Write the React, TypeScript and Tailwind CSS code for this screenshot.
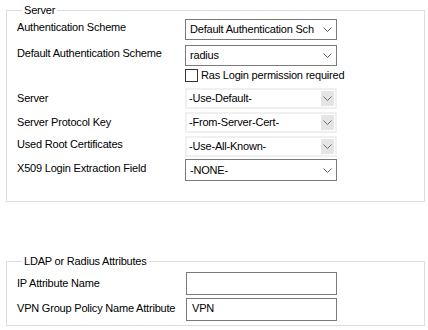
import React from "react";

function Chevron({ color }: { color: string }) {
  return (
    <svg width="9" height="5" viewBox="0 0 9 5" className="shrink-0">
      <path d="M0.5 0.5 L4.5 4.5 L8.5 0.5" fill="none" stroke={color} strokeWidth="1" />
    </svg>
  );
}

function Combo({ text }: { text: string }) {
  return (
    <div className="h-[21px] w-[152px] border border-[#7a7a7a] bg-white flex items-center pl-[4px] pr-[4px]">
      <span className="flex-1 whitespace-nowrap overflow-hidden leading-[15px]">{text}</span>
      <Chevron color="#5a5a5a" />
    </div>
  );
}

function DisabledCombo({ text }: { text: string }) {
  return (
    <div className="h-[21px] w-[152px] border-2 border-[#f0f0f0] bg-white flex items-center pl-[2px] pr-[1px]">
      <span className="flex-1 whitespace-nowrap overflow-hidden leading-[15px]">{text}</span>
      <div className="w-[13px] h-[15px] bg-[#e5e5e5] flex items-center justify-center">
        <Chevron color="#6e6e6e" />
      </div>
    </div>
  );
}

function Row({
  label,
  labelTop,
  top,
  children,
}: {
  label: string;
  labelTop: string;
  top: string;
  children: React.ReactNode;
}) {
  return (
    <div className={`flex items-start ${top}`}>
      <div className={`w-[168px] leading-[15px] whitespace-nowrap ${labelTop}`}>{label}</div>
      {children}
    </div>
  );
}

export default function App() {
  return (
    <div className="w-[428px] h-[330px] bg-white text-black text-[11px] tracking-[-0.2px] font-['Liberation_Sans',Arial,sans-serif] overflow-hidden flex flex-col">
      <fieldset className="ml-[6px] mt-[3px] w-[419px] h-[199px] border border-[#dcdcdc] pl-[10px]">
        <legend className="ml-[5px] px-[2px] leading-[14px]">Server</legend>
        <div className="flex flex-col">
          <Row label="Authentication Scheme" labelTop="mt-[1px]" top="mt-[2px]">
            <Combo text="Default Authentication Sch" />
          </Row>
          <Row label="Default Authentication Scheme" labelTop="mt-[1px]" top="mt-[5px]">
            <Combo text="radius" />
          </Row>
          <div className="flex items-center mt-[3px] pl-[168px] h-[13px]">
            <div className="w-[13px] h-[13px] border border-[#333333] bg-white" />
            <span className="ml-[3px] leading-[15px] whitespace-nowrap">Ras Login permission required</span>
          </div>
          <Row label="Server" labelTop="mt-[3px]" top="mt-[6px]">
            <DisabledCombo text="-Use-Default-" />
          </Row>
          <Row label="Server Protocol Key" labelTop="mt-[3px]" top="mt-[3px]">
            <DisabledCombo text="-From-Server-Cert-" />
          </Row>
          <Row label="Used Root Certificates" labelTop="mt-[1px]" top="mt-[3px]">
            <DisabledCombo text="-Use-All-Known-" />
          </Row>
          <Row label="X509 Login Extraction Field" labelTop="mt-[2px]" top="mt-[2px]">
            <div className="h-[22px] w-[152px] border border-[#7a7a7a] bg-white flex items-center pl-[4px] pr-[4px]">
              <span className="flex-1 whitespace-nowrap overflow-hidden leading-[15px]">-NONE-</span>
              <Chevron color="#5a5a5a" />
            </div>
          </Row>
        </div>
      </fieldset>

      <fieldset className="ml-[6px] mt-[52px] w-[419px] h-[72px] border border-[#dcdcdc] pl-[10px]">
        <legend className="ml-[5px] px-[2px] leading-[14px]">LDAP or Radius Attributes</legend>
        <div className="flex flex-col">
          <div className="flex items-start mt-[4px]">
            <div className="w-[169px] leading-[15px] mt-[4px] whitespace-nowrap">IP Attribute Name</div>
            <div className="h-[23px] w-[151px] border border-[#7a7a7a] bg-white" />
          </div>
          <div className="flex items-start mt-[3px]">
            <div className="w-[169px] leading-[15px] mt-[3px] whitespace-nowrap">VPN Group Policy Name Attribute</div>
            <div className="h-[23px] w-[151px] border border-[#7a7a7a] bg-white pl-[5px] pt-[2px] leading-[15px]">VPN</div>
          </div>
        </div>
      </fieldset>
    </div>
  );
}
